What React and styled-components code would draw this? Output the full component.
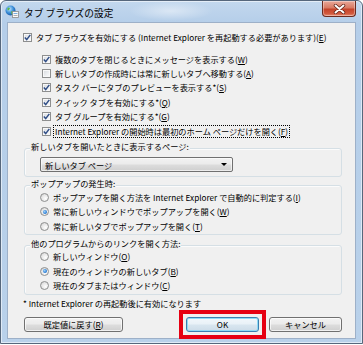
import React from 'react';
import styled, { createGlobalStyle } from 'styled-components';

const Global = createGlobalStyle`
  html, body { margin: 0; padding: 0; background: #ffffff; }
  body { font-family: "Noto Sans CJK JP", "Liberation Sans", sans-serif; color: #000; }
  * { box-sizing: border-box; }
`;

const Window = styled.div`
  width: 363px;
  height: 344px;
  display: flex;
  flex-direction: column;
  border: 1px solid #56677c;
  border-radius: 6px 6px 0 0;
  padding-bottom: 4px;
  background:
    radial-gradient(ellipse 60px 14px at 170px 10px, rgba(255,255,255,0.45), rgba(255,255,255,0) 70%),
    linear-gradient(to bottom, #c3d8ee 0px, #b5cee9 22px, #b9d1ea 100%);
  box-shadow: inset 0 0 0 1px rgba(255,255,255,0.55);
`;

const TitleBar = styled.div`
  height: 21px;
  display: flex;
  align-items: center;
  padding-left: 4px;
`;

const TitleText = styled.span`
  font-size: 9.7px;
  line-height: 12px;
  margin-left: 5px;
  margin-top: 2px;
  color: #000;
`;

const CloseButton = styled.div`
  align-self: flex-start;
  margin-left: auto;
  margin-right: 6px;
  width: 34px;
  height: 16px;
  border: 1px solid #6b2a1e;
  border-top: none;
  border-radius: 0 0 4px 4px;
  background: linear-gradient(to bottom, #e9a899 0%, #d87a64 45%, #c5432a 55%, #d25a3e 85%, #e89078 100%);
  display: flex;
  align-items: center;
  justify-content: center;
  box-shadow: inset 0 0 0 1px rgba(255,255,255,0.35);
`;

const Client = styled.div`
  flex: 1;
  margin: 0 6px;
  border: 1px solid #9db0c8;
  background: #f0f0f0;
  padding: 7px 13px 0 16px;
  display: flex;
  flex-direction: column;
  font-size: 8.2px;
`;

const Row = styled.div`
  height: ${p => p.$h || 14.4}px;
  display: flex;
  align-items: center;
  gap: 3px;
  white-space: nowrap;
  line-height: 12px;
  margin-left: ${p => p.$ml || 0}px;
`;

const SubList = styled.div`
  display: flex;
  flex-direction: column;
  margin-top: 8px;
  padding-left: 18px;
`;

const Box = styled.span`
  width: 9px;
  height: 9px;
  flex: none;
  border: 1px solid #8e8f8f;
  background: linear-gradient(135deg, #d5d8dc 0%, #eef0f2 60%, #fbfbfb 100%);
  box-shadow: inset 0 0 0 1px #f8f8f8;
  display: flex;
  align-items: center;
  justify-content: center;
`;

const Radio = styled.span`
  width: 9px;
  height: 9px;
  flex: none;
  border-radius: 50%;
  border: 1px solid #8e8f8f;
  background: radial-gradient(circle at 65% 65%, #ffffff 0%, #e9e9e9 50%, #cfcfcf 100%);
  display: flex;
  align-items: center;
  justify-content: center;
`;

const Dot = styled.span`
  width: 4px;
  height: 4px;
  border-radius: 50%;
  background: radial-gradient(circle at 40% 40%, #9fd3fa 0%, #2d7fd6 60%, #1d5aa8 100%);
`;

const Label = styled.span`
  padding: 0 1px;
  outline: ${p => (p.$focus ? '1px dotted #000' : 'none')};
  line-height: 11px;
`;

const Key = styled.span`
  text-decoration: underline;
  text-underline-offset: 1px;
`;

const Group = styled.div`
  margin-top: ${p => p.$mt}px;
  border: 1px solid #d5dfe5;
  border-radius: 3px;
  padding: 0 0 ${p => p.$pb || 0}px 15px;
  display: flex;
  flex-direction: column;
  box-shadow: inset 1px 1px 0 #fbfbfb;
`;

const Legend = styled.span`
  align-self: flex-start;
  margin: -9px 0 1px -10px;
  padding: 0 1px;
  height: 12px;
  line-height: 12px;
  background: #f0f0f0;
  white-space: nowrap;
`;

const Select = styled.div`
  margin-top: 4px;
  width: 193px;
  height: 15px;
  border: 1px solid #707070;
  border-radius: 2px;
  background: linear-gradient(to bottom, #f2f2f2 0%, #ebebeb 48%, #dddddd 52%, #cfcfcf 100%);
  box-shadow: inset 0 0 0 1px rgba(255,255,255,0.6);
  display: flex;
  align-items: center;
  justify-content: space-between;
  padding: 0 5px 0 4px;
  line-height: 12px;
`;

const Arrow = styled.span`
  width: 0;
  height: 0;
  border-left: 3px solid transparent;
  border-right: 3px solid transparent;
  border-top: 3px solid #000;
`;

const Note = styled.div`
  margin-top: 2px;
  margin-left: -1px;
  line-height: 12px;
  white-space: nowrap;
`;

const ButtonRow = styled.div`
  margin-top: 8px;
  display: flex;
  justify-content: space-between;
  align-items: center;
`;

const RightButtons = styled.div`
  display: flex;
  gap: 10px;
`;

const Button = styled.div`
  position: relative;
  width: ${p => p.$w}px;
  height: 15.5px;
  border: 1px solid ${p => (p.$default ? '#3c7fb1' : '#707070')};
  border-radius: 3px;
  background: ${p =>
    p.$default
      ? 'linear-gradient(to bottom, #f2f7fb 0%, #e9f1f7 48%, #d9e6f0 52%, #cddce8 100%)'
      : 'linear-gradient(to bottom, #f2f2f2 0%, #ebebeb 48%, #dddddd 52%, #cfcfcf 100%)'};
  box-shadow: inset 0 0 0 1px ${p => (p.$default ? '#8fdaf5' : 'rgba(255,255,255,0.7)')};
  display: flex;
  align-items: center;
  justify-content: center;
  line-height: 12px;
  white-space: nowrap;
`;

const Highlight = styled.span`
  position: absolute;
  left: -8px;
  right: -8px;
  top: -8px;
  bottom: -8px;
  border: 4px solid #e60012;
  pointer-events: none;
`;

const Check = () => (
  <svg width="7" height="7" viewBox="0 0 7 7">
    <path d="M0.8 3.6 L2.7 5.6 L6.3 0.9" fill="none" stroke="#2f4d86" strokeWidth="1.5" />
  </svg>
);

const IEIcon = () => (
  <svg width="14" height="13" viewBox="0 0 14 13">
    <defs>
      <radialGradient id="g" cx="40%" cy="35%" r="65%">
        <stop offset="0%" stopColor="#bfe4ff" />
        <stop offset="60%" stopColor="#3b8ed8" />
        <stop offset="100%" stopColor="#1a5aa8" />
      </radialGradient>
    </defs>
    <circle cx="5.5" cy="5.5" r="5" fill="url(#g)" />
    <path d="M2.5 3 Q4 2 5 3.5 Q4.5 5 3 5.5 Q2 4.5 2.5 3 Z" fill="#5cb848" />
    <path d="M6.5 6 Q8.5 5.5 9.5 7 Q8.5 9.5 6.5 9.5 Q6 7.5 6.5 6 Z" fill="#5cb848" />
    <rect x="7.5" y="6.5" width="6" height="6" fill="#fafafa" stroke="#8a8a8a" strokeWidth="0.8" />
    <rect x="8.5" y="8" width="4" height="0.8" fill="#5a9bd8" />
    <rect x="8.5" y="10" width="4" height="0.8" fill="#9a9a9a" />
  </svg>
);

const CloseX = () => (
  <svg width="13" height="10" viewBox="0 0 13 10">
    <path d="M2.5 1.5 L10.5 8.5 M10.5 1.5 L2.5 8.5" stroke="#5a1e14" strokeWidth="3.4" strokeLinecap="round" />
    <path d="M2.5 1.5 L10.5 8.5 M10.5 1.5 L2.5 8.5" stroke="#ffffff" strokeWidth="2" strokeLinecap="round" />
  </svg>
);

const checks = [
  { text: '複数のタブを閉じるときにメッセージを表示する', key: 'W', on: true },
  { text: '新しいタブの作成時には常に新しいタブへ移動する', key: 'A', on: false },
  { text: 'タスク バーにタブのプレビューを表示する*', key: 'S', on: true },
  { text: 'クイック タブを有効にする*', key: 'Q', on: true },
  { text: 'タブ グループを有効にする*', key: 'G', on: true },
  { text: 'Internet Explorer の開始時は最初のホーム ページだけを開く', key: 'F', on: true, focus: true },
];

const popup = [
  { text: 'ポップアップを開く方法を Internet Explorer で自動的に判定する', key: 'I' },
  { text: '常に新しいウィンドウでポップアップを開く', key: 'W', on: true },
  { text: '常に新しいタブでポップアップを開く', key: 'T' },
];

const links = [
  { text: '新しいウィンドウ', key: 'O' },
  { text: '現在のウィンドウの新しいタブ', key: 'B', on: true },
  { text: '現在のタブまたはウィンドウ', key: 'C' },
];

const Accel = ({ text, k }) => (
  <>
    {text}(<Key>{k}</Key>)
  </>
);

export default function App() {
  return (
    <>
      <Global />
      <Window>
        <TitleBar>
          <IEIcon />
          <TitleText>タブ ブラウズの設定</TitleText>
          <CloseButton>
            <CloseX />
          </CloseButton>
        </TitleBar>
        <Client>
          <Row $h={14} $ml={-1}>
            <Box>
              <Check />
            </Box>
            <Label>
              <Accel text="タブ ブラウズを有効にする (Internet Explorer を再起動する必要があります)" k="E" />
            </Label>
          </Row>
          <SubList>
            {checks.map(c => (
              <Row key={c.text}>
                <Box>{c.on && <Check />}</Box>
                <Label $focus={c.focus}>
                  <Accel text={c.text} k={c.key} />
                </Label>
              </Row>
            ))}
          </SubList>
          <Group $mt={10} $pb={4}>
            <Legend>新しいタブを開いたときに表示するページ:</Legend>
            <Select>
              <span>新しいタブ ページ</span>
              <Arrow />
            </Select>
          </Group>
          <Group $mt={8}>
            <Legend>ポップアップの発生時:</Legend>
            {popup.map(r => (
              <Row key={r.text}>
                <Radio>{r.on && <Dot />}</Radio>
                <Label>
                  <Accel text={r.text} k={r.key} />
                </Label>
              </Row>
            ))}
          </Group>
          <Group $mt={10} $pb={1}>
            <Legend>他のプログラムからのリンクを開く方法:</Legend>
            {links.map(r => (
              <Row key={r.text}>
                <Radio>{r.on && <Dot />}</Radio>
                <Label>
                  <Accel text={r.text} k={r.key} />
                </Label>
              </Row>
            ))}
          </Group>
          <Note>* Internet Explorer の再起動後に有効になります</Note>
          <ButtonRow>
            <Button $w={99}>
              <Accel text="既定値に戻す" k="R" />
            </Button>
            <RightButtons>
              <Button $w={73} $default>
                OK
                <Highlight />
              </Button>
              <Button $w={73}>キャンセル</Button>
            </RightButtons>
          </ButtonRow>
        </Client>
      </Window>
    </>
  );
}
